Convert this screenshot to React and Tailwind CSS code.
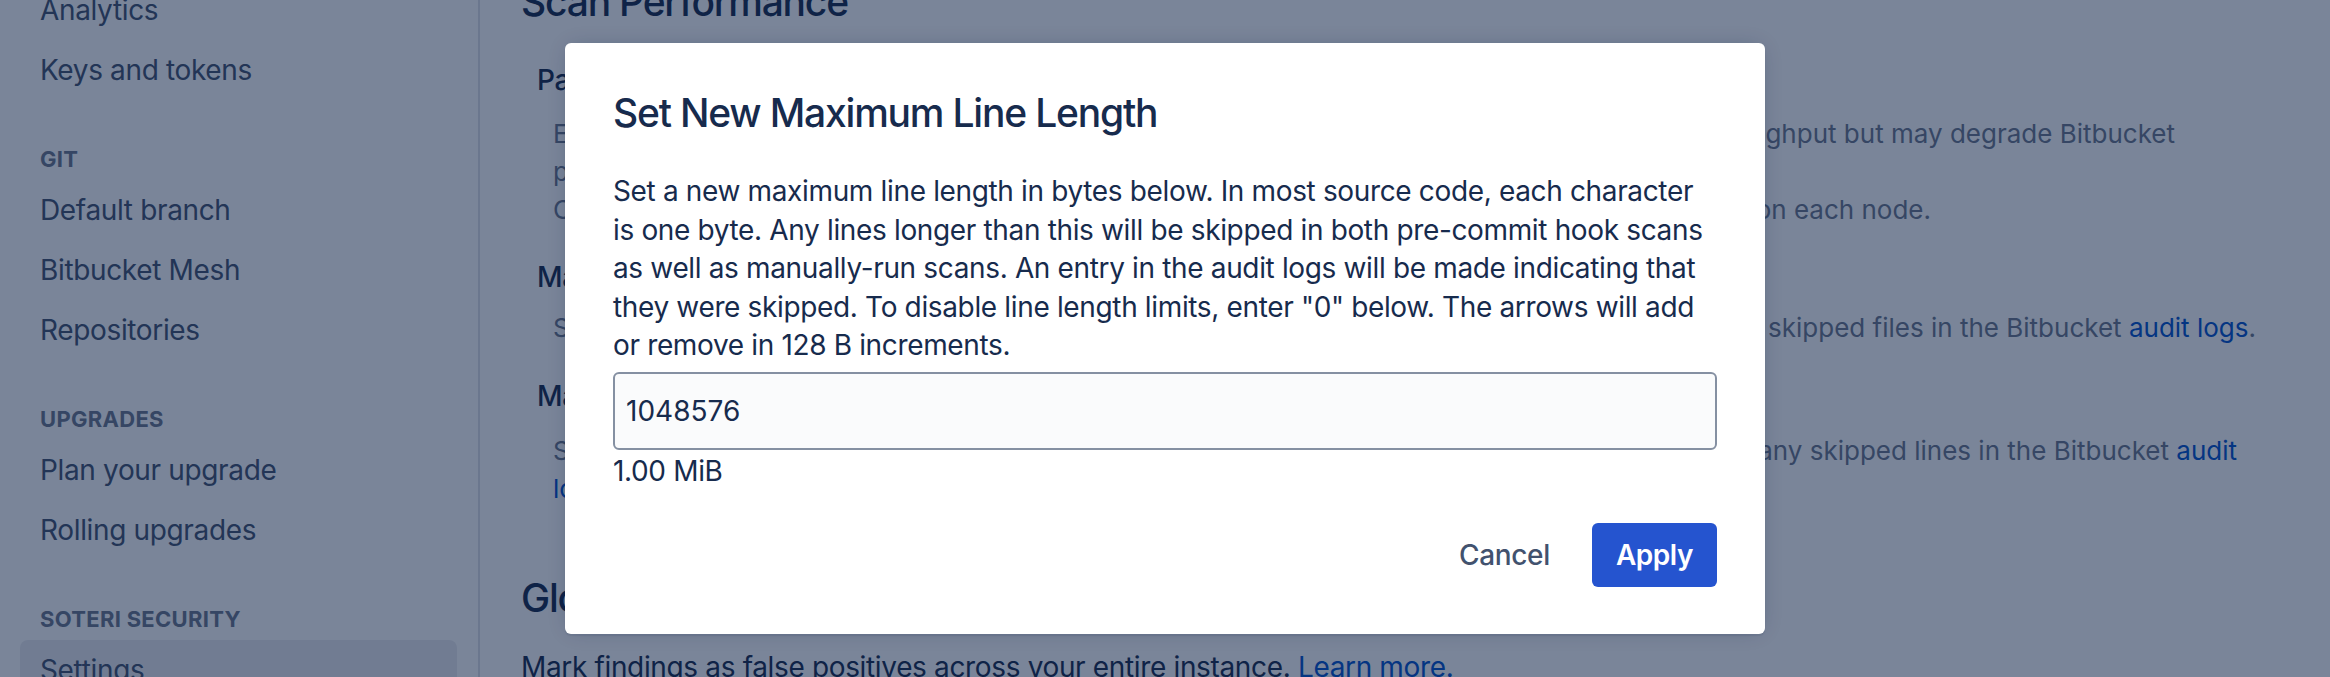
const NavItem = ({ label, active }) => (
  <div
    className={`h-[60px] flex items-center px-[20px] rounded-[8px] whitespace-nowrap ${
      active ? 'bg-[#EBECF0]' : ''
    }`}
  >
    {label}
  </div>
);

const NavHeading = ({ label }) => (
  <div className="pt-[43px] pb-[5px] px-[20px] text-[22px] leading-[32px] font-bold uppercase tracking-[0.3px] text-[#6B778C]">
    {label}
  </div>
);

// one wrapped line of a description; only its two ends show around the dialog
const SplitLine = ({ left, right, width }) => (
  <div className={`flex justify-between whitespace-nowrap ${width}`}>
    <span>{left}</span>
    <span>{right}</span>
  </div>
);

const Sidebar = () => (
  <aside className="w-[480px] shrink-0 border-r-2 border-[#DFE1E6] bg-white pl-[20px] pr-[21px] text-[28px] tracking-[-0.35px] text-[#42526E]">
    <div className="-mt-[20px]">
      <NavItem label="Analytics" />
      <NavItem label="Keys and tokens" />
      <NavHeading label="Git" />
      <NavItem label="Default branch" />
      <NavItem label="Bitbucket Mesh" />
      <NavItem label="Repositories" />
      <NavHeading label="Upgrades" />
      <NavItem label="Plan your upgrade" />
      <NavItem label="Rolling upgrades" />
      <NavHeading label="Soteri Security" />
      <NavItem label="Settings" active />
    </div>
  </aside>
);

const Main = () => (
  <main className="flex-1 pl-[41px] text-[#172B4D]">
    <div className="-mt-[22px]">
      <h2 className="text-[39px] leading-[48px] font-medium tracking-[-1.2px]">Scan Performance</h2>

      <div className="pl-[16px]">
        <h3 className="mt-[34px] text-[28px] leading-[40px] font-medium tracking-[-0.35px]">Parallel Scanning</h3>
        <div className="mt-[15px] pl-[16px] text-[26px] leading-[38px] text-[#6B778C]">
          <SplitLine
            width="w-[1622px]"
            left="Each scan thread processes one repository at a time. More threads increase"
            right="throughput but may degrade Bitbucket"
          />
          <div>performance for users while scans are running.</div>
          <SplitLine
            width="w-[1378px]"
            left="Changes are saved immediately and apply to the scanners running"
            right="on each node."
          />
        </div>

        <h3 className="mt-[28px] text-[28px] leading-[40px] font-medium tracking-[-0.35px]">Maximum File Size</h3>
        <div className="mt-[12px] pl-[16px] text-[26px] leading-[38px] text-[#6B778C]">
          <SplitLine
            width="w-[1703px]"
            left="Skip files larger than this size. You can review any"
            right={
              <>
                skipped files in the Bitbucket <a className="text-[#0052CC]">audit logs</a>.
              </>
            }
          />
        </div>

        <h3 className="mt-[29px] text-[28px] leading-[40px] font-medium tracking-[-0.35px]">Maximum Line Length</h3>
        <div className="mt-[16px] pl-[16px] text-[26px] leading-[38px] text-[#6B778C]">
          <SplitLine
            width="w-[1684px]"
            left="Skip lines longer than this length. You can review"
            right={
              <>
                any skipped lines in the Bitbucket <a className="text-[#0052CC]">audit</a>
              </>
            }
          />
          <div>
            <a className="text-[#0052CC]">logs</a>.
          </div>
        </div>
      </div>

      <h2 className="mt-[66px] text-[39px] leading-[48px] font-medium tracking-[-1.2px]">Global Allowlist</h2>
      <p className="mt-[26px] text-[28px] leading-[38px] tracking-[-0.35px]">
        Mark findings as false positives across your entire instance.{' '}
        <a className="text-[#0052CC]">Learn more.</a>
      </p>
    </div>
  </main>
);

const LineLengthDialog = () => (
  <div className="w-[1200px] rounded-[6px] bg-white px-[48px] pt-[46px] pb-[47px] text-[#172B4D] shadow-[0_0_20px_-6px_rgba(9,30,66,0.31),0_2px_1px_rgba(9,30,66,0.08)]">
    <h1 className="text-[39px] leading-[48px] font-medium tracking-[-1.2px]">Set New Maximum Line Length</h1>
    <p className="mt-[35px] text-[28px] leading-[38.5px] tracking-[-0.35px] whitespace-nowrap">
      Set a new maximum line length in bytes below. In most source code, each character
      <br />
      is one byte. Any lines longer than this will be skipped in both pre-commit hook scans
      <br />
      as well as manually-run scans. An entry in the audit logs will be made indicating that
      <br />
      they were skipped. To disable line length limits, enter "0" below. The arrows will add
      <br />
      or remove in 128 B increments.
    </p>
    <input
      type="text"
      defaultValue="1048576"
      className="mt-[7px] block w-full h-[78px] rounded-[6px] border-2 border-[#8590A2] bg-[#FAFBFC] px-[11px] text-[28px] text-[#172B4D] outline-none"
    />
    <div className="mt-[2px] text-[28px] leading-[38px] tracking-[-0.35px]">1.00 MiB</div>
    <div className="mt-[33px] flex justify-end gap-[18px]">
      <button className="h-[64px] px-[24px] rounded-[6px] text-[28px] font-medium tracking-[-0.35px] text-[#42526E]">
        Cancel
      </button>
      <button className="h-[64px] px-[24px] rounded-[6px] bg-[#2554CF] text-[28px] font-semibold tracking-[-0.45px] text-white">
        Apply
      </button>
    </div>
  </div>
);

export default function App() {
  return (
    <div className="relative w-[2330px] h-[677px] overflow-hidden flex bg-white font-[Inter,sans-serif]">
      <Sidebar />
      <Main />
      <div className="absolute inset-0 flex items-center justify-center bg-[rgba(9,30,66,0.54)]">
        <LineLengthDialog />
      </div>
    </div>
  );
}
